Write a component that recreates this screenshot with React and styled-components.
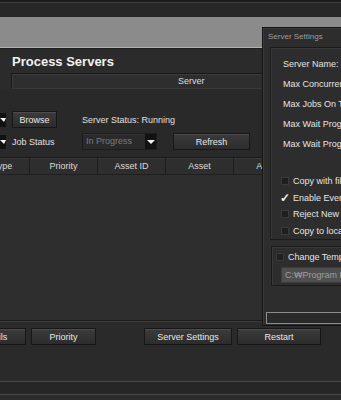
import React from 'react'
import styled, { createGlobalStyle } from 'styled-components'

const GlobalStyle = createGlobalStyle`
  *{
    margin: 0;
    padding: 0;
    box-sizing: border-box;
  }
  body{
    background: #2b2b2b;
    font-family: "Liberation Sans", Arial, sans-serif;
    font-size: 9px;
    color: #e2e2e2;
  }
`

const Screen = styled.div`
  position: relative;
  width: 341px;
  height: 400px;
  overflow: hidden;
  background: #2b2b2b;
`

const TopBar = styled.div`
  height: 17px;
  background: #272727;
  border-top: 2px solid #1c1c1c;
  box-shadow: inset 0 1px 0 #3e3e3e;
`

const GrayBand = styled.div`
  height: 32px;
  background: #8b8b8b;
  border-bottom: 1px solid #1e1e1e;
  box-shadow: inset 0 -1px 0 #b2b2b2;
`

const Panel = styled.div`
  display: flex;
  flex-direction: column;
  background: #2b2b2b;
`

const Title = styled.h1`
  height: 24px;
  line-height: 25px;
  padding-left: 12px;
  font-size: 13px;
  font-weight: bold;
  color: #f2f2f2;
`

const ServerHeader = styled.div`
  height: 16px;
  margin-left: 11px;
  border-top: 1px solid #181818;
  border-left: 1px solid #181818;
  border-bottom: 1px solid #3a3a3a;
  background: #2e2e2e;
  box-shadow: inset 1px 1px 0 #3c3c3c;
  line-height: 14px;
  padding-left: 166px;
  color: #dedede;
`

const Controls = styled.div`
  display: grid;
  grid-template-columns: 6px 6px 70px 75px 16px 77px;
  grid-template-rows: 17px 17px;
  row-gap: 5px;
  align-items: center;
  padding-top: 22px;
  height: 68px;
  background: #292929;
`

const ComboTail = styled.div`
  grid-column: 1;
  height: 14px;
  background: #111;
  display: flex;
  align-items: center;
  justify-content: flex-start;
  &::after{
    content: '';
    border-left: 4px solid transparent;
    border-right: 2px solid transparent;
    border-top: 4px solid #f4f4f4;
  }
`

const Button = styled.button`
  height: 17px;
  width: ${p => p.$w || 65}px;
  margin-left: ${p => p.$ml || 0}px;
  grid-column: ${p => p.$col || 'auto'};
  background: linear-gradient(#3b3b3b, #2c2c2c);
  border: 1px solid #171717;
  box-shadow: inset 0 1px 0 #4c4c4c;
  color: #e8e8e8;
  font-family: inherit;
  font-size: 9px;
  flex-shrink: 0;
`

const Label = styled.span`
  grid-column: ${p => p.$col};
  white-space: nowrap;
  color: #e0e0e0;
`

const Combo = styled.div`
  grid-column: 4;
  height: 17px;
  display: flex;
  background: #2a2a2a;
  border: 1px solid #1c1c1c;
  box-shadow: inset 0 1px 0 #363636;
  color: #7c7c7c;
  span{
    flex: 1;
    line-height: 15px;
    padding-left: 3px;
  }
`

const ComboArrow = styled.div`
  width: 11px;
  background: #121212;
  display: flex;
  align-items: center;
  justify-content: center;
  &::after{
    content: '';
    border-left: 4px solid transparent;
    border-right: 4px solid transparent;
    border-top: 4px solid #f2f2f2;
  }
`

const TableHeader = styled.div`
  display: grid;
  grid-template-columns: 54px repeat(5, 68px);
  margin-left: -24px;
  height: 18px;
  border-top: 1px solid #1a1a1a;
  border-bottom: 1px solid #1f1f1f;
  background: #2e2e2e;
  box-shadow: inset 0 1px 0 #3a3a3a;
`

const HeaderCell = styled.div`
  text-align: center;
  line-height: 17px;
  border-right: 1px solid #1d1d1d;
  color: #dcdcdc;
`

const TableBody = styled.div`
  height: 146px;
  background: #2e2e2e;
  border-bottom: 1px solid #1a1a1a;
`

const Footer = styled.div`
  display: flex;
  gap: 5px;
  margin-left: -39px;
  padding-top: 6px;
  height: 60px;
  border-top: 1px solid #3c3c3c;
  background: #2a2a2a;
`

const StatusBar = styled.div`
  height: 14px;
  border-top: 1px solid #4a4a4a;
  border-bottom: 1px solid #4a4a4a;
  background: #262626;
`

const Dialog = styled.div`
  position: absolute;
  left: 262px;
  top: 27px;
  width: 100px;
  height: 299px;
  background: #2d2d2d;
  border: 1px solid #141414;
  box-shadow: inset 1px 1px 0 #3a3a3a;
  display: flex;
  flex-direction: column;
`

const DialogTitle = styled.div`
  height: 19px;
  line-height: 17px;
  padding-left: 5px;
  font-size: 8px;
  color: #9c9c9c;
`

const GroupBox = styled.div`
  display: flex;
  flex-direction: column;
  margin-left: ${p => p.$ml}px;
  height: ${p => p.$h}px;
  margin-top: ${p => p.$mt || 0}px;
  border: 1px solid #1b1b1b;
  border-right: none;
  box-shadow: inset 1px 1px 0 #393939;
  padding-top: ${p => p.$pt || 0}px;
`

const FieldLabel = styled.div`
  height: 18px;
  line-height: 18px;
  margin-bottom: 2px;
  padding-left: 12px;
  white-space: nowrap;
  color: #e4e4e4;
`

const CheckRow = styled.div`
  display: flex;
  align-items: center;
  gap: 4px;
  height: 17px;
  padding-left: ${p => p.$pl || 10}px;
  white-space: nowrap;
  color: #e4e4e4;
  margin-top: ${p => p.$mt || 0}px;
`

const Box = styled.span`
  width: 8px;
  height: 8px;
  flex-shrink: 0;
  background: #1f1f1f;
  border: 1px solid #3a3a3a;
  display: flex;
  align-items: center;
  justify-content: center;
  font-size: 12px;
  font-weight: bold;
  line-height: 8px;
  color: #f0f0f0;
  ${p => p.$checked && `
    background: transparent;
    border-color: transparent;
  `}
`

const PathInput = styled.div`
  margin: 2px 0 0 9px;
  height: 16px;
  line-height: 15px;
  padding-left: 3px;
  background: #4f4f4f;
  border: 1px solid #3c3c3c;
  color: #9e9e9e;
  white-space: nowrap;
`

const BottomField = styled.div`
  margin: 26px 0 0 3px;
  height: 12px;
  border: 1px solid #8c8c8c;
  border-right: none;
  background: #2a2a2a;
`

export default function App() {
  return (
    <Screen>
      <GlobalStyle />
      <TopBar />
      <GrayBand />
      <Panel>
        <Title>Process Servers</Title>
        <ServerHeader>Server</ServerHeader>
        <Controls>
          <ComboTail />
          <Button $col={3} $w={45}>Browse</Button>
          <Label $col="4 / 7">Server Status: Running</Label>
          <ComboTail />
          <Label $col={3}>Job Status</Label>
          <Combo>
            <span>In Progress</span>
            <ComboArrow />
          </Combo>
          <Button $col={6} $w={77}>Refresh</Button>
        </Controls>
        <TableHeader>
          <HeaderCell>Type</HeaderCell>
          <HeaderCell>Priority</HeaderCell>
          <HeaderCell>Asset ID</HeaderCell>
          <HeaderCell>Asset</HeaderCell>
          <HeaderCell>Asset</HeaderCell>
          <HeaderCell>Status</HeaderCell>
        </TableHeader>
        <TableBody />
        <Footer>
          <Button $w={65}>Details</Button>
          <Button $w={65}>Priority</Button>
          <Button $w={88} $ml={43}>Server Settings</Button>
          <Button $w={84}>Restart</Button>
        </Footer>
        <StatusBar />
      </Panel>

      <Dialog>
        <DialogTitle>Server Settings</DialogTitle>
        <GroupBox $ml={7} $h={193} $pt={7}>
          <FieldLabel>Server Name:</FieldLabel>
          <FieldLabel>Max Concurrent Jobs:</FieldLabel>
          <FieldLabel>Max Jobs On The Queue:</FieldLabel>
          <FieldLabel>Max Wait Progress:</FieldLabel>
          <FieldLabel>Max Wait Progress Time:</FieldLabel>
          <CheckRow $mt={18}><Box />Copy with file</CheckRow>
          <CheckRow><Box $checked>✓</Box>Enable Event Log</CheckRow>
          <CheckRow><Box />Reject New Jobs</CheckRow>
          <CheckRow><Box />Copy to local</CheckRow>
        </GroupBox>
        <GroupBox $ml={8} $h={40} $mt={6} $pt={1}>
          <CheckRow $pl={4}><Box />Change Temp Folder</CheckRow>
          <PathInput>C:₩Program Files</PathInput>
        </GroupBox>
        <BottomField />
      </Dialog>
    </Screen>
  )
}
